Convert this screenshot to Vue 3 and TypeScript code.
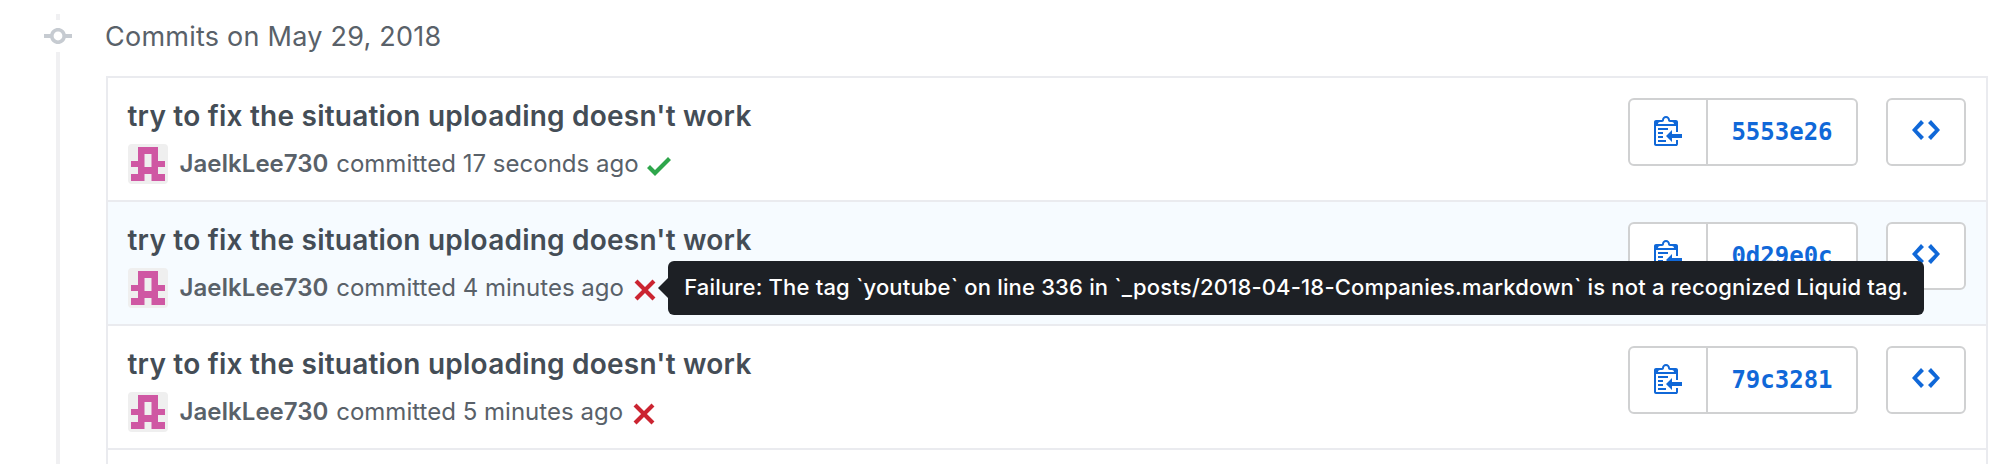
<script setup lang="ts">
interface Commit {
  sha: string
  title: string
  author: string
  time: string
  passed: boolean
  active?: boolean
  tooltip?: string
}

const title = "try to fix the situation uploading doesn't work"
const author = 'JaeIkLee730'

const commits: Commit[] = [
  { sha: '5553e26', title, author, time: '17 seconds ago', passed: true },
  {
    sha: '0d29e0c',
    title,
    author,
    time: '4 minutes ago',
    passed: false,
    active: true,
    tooltip:
      'Failure: The tag `youtube` on line 336 in `_posts/2018-04-18-Companies.markdown` is not a recognized Liquid tag.',
  },
  { sha: '79c3281', title, author, time: '5 minutes ago', passed: false },
]
</script>

<template>
  <main class="page">
    <aside class="rail">
      <span class="line line-top"></span>
      <svg class="node" width="28" height="32" viewBox="0 0 14 16">
        <path d="M10.86 7c-.45-1.72-2-3-3.86-3-1.86 0-3.41 1.28-3.86 3H0v2h3.14c.45 1.72 2 3 3.86 3 1.86 0 3.41-1.28 3.86-3H14V7h-3.14zM7 10.2c-1.22 0-2.2-.98-2.2-2.2 0-1.22.98-2.2 2.2-2.2 1.22 0 2.2.98 2.2 2.2 0 1.22-.98 2.2-2.2 2.2z" />
      </svg>
      <span class="line line-rest"></span>
    </aside>

    <section class="group">
      <h3 class="date">Commits on May 29, 2018</h3>
      <ol class="commits">
        <li v-for="c in commits" :key="c.sha" class="commit" :class="{ active: c.active }">
          <div class="info">
            <p class="title">{{ c.title }}</p>
            <div class="meta">
              <svg class="avatar" width="40" height="40" viewBox="0 0 40 40">
                <rect width="40" height="40" rx="4" fill="#efefef" />
                <path fill="#cf57a3" d="M10 3h20v14h7v6h-7v7h7v7H23.5v-7h-7v7H3v-7h7v-7H3v-6h7zM16.5 10v13h7V10z" />
              </svg>
              <span class="text"><b>{{ c.author }}</b> committed {{ c.time }}</span>
              <span class="status" :class="{ passed: c.passed }">
                <svg width="24" height="32" viewBox="0 0 12 16">
                  <path v-if="c.passed" d="M12 5l-8 8-4-4 1.5-1.5L4 10l6.5-6.5L12 5z" />
                  <path v-else d="M7.48 8l3.75 3.75-1.48 1.48L6 9.48l-3.75 3.75-1.48-1.48L4.52 8 .77 4.25l1.48-1.48L6 6.52l3.75-3.75 1.48 1.48L7.48 8z" />
                </svg>
                <span v-if="c.tooltip" class="tooltip">{{ c.tooltip }}</span>
              </span>
            </div>
          </div>
          <div class="actions">
            <div class="pair">
              <button class="copy" type="button" aria-label="Copy SHA">
                <svg width="28" height="32" viewBox="0 0 14 16">
                  <path fill-rule="evenodd" d="M2 13h4v1H2v-1zm5-6H2v1h5V7zm2 3V8l-3 3 3 3v-2h5v-2H9zM4.5 9H2v1h2.5V9zM2 12h2.5v-1H2v1zm9 1h1v2c-.02.28-.11.52-.3.7-.19.18-.42.28-.7.3H1c-.55 0-1-.45-1-1V4c0-.55.45-1 1-1h3c0-1.11.89-2 2-2 1.11 0 2 .89 2 2h3c.55 0 1 .45 1 1v5h-1V6H1v9h10v-2zM2 5h8c0-.55-.45-1-1-1H8c-.55 0-1-.45-1-1s-.45-1-1-1-1 .45-1 1-.45 1-1 1H3c-.55 0-1 .45-1 1z" />
                </svg>
              </button>
              <button class="sha" type="button">{{ c.sha }}</button>
            </div>
            <button class="browse" type="button" aria-label="Browse files">
              <svg width="28" height="32" viewBox="0 0 14 16">
                <path d="M9.5 3L8 4.5 11.5 8 8 11.5 9.5 13 14 8 9.5 3zm-5 0L0 8l4.5 5L6 11.5 2.5 8 6 4.5 4.5 3z" />
              </svg>
            </button>
          </div>
        </li>
        <li class="commit"></li>
      </ol>
    </section>
  </main>
</template>

<style scoped>
* {
  box-sizing: border-box;
}

.page {
  display: flex;
  height: 464px;
  overflow: hidden;
  background: #fff;
  font-family: Inter, "Liberation Sans", sans-serif;
}

.rail {
  display: flex;
  flex: 0 0 106px;
  flex-direction: column;
  padding: 14px 0 0 44px;
}

.line {
  width: 4px;
  margin-left: 12px;
  background: #f0f0f2;
}

.line-top {
  height: 6px;
}

.line-rest {
  flex: 1;
}

.node {
  display: block;
  flex: none;
  fill: #c6cbd1;
}

.group {
  width: 1882px;
  padding-top: 21px;
}

.date {
  margin: 0 0 23px -1px;
  color: #596169;
  font-size: 27px;
  font-weight: 400;
  line-height: 32px;
  letter-spacing: 0.24px;
}

.commits {
  margin: 0;
  padding: 0;
  border: 2px solid #eaebef;
  border-bottom: 0;
  list-style: none;
}

.commit {
  display: flex;
  justify-content: space-between;
  height: 124px;
  padding: 18px 20px 16px;
  border-bottom: 2px solid #eaebef;
}

.active {
  background: #f6fbff;
}

.title {
  margin: 0 0 8px -0.5px;
  color: #444d56;
  font-size: 28px;
  font-weight: 600;
  line-height: 40px;
  letter-spacing: 0.22px;
  white-space: nowrap;
}

.meta {
  display: flex;
  height: 40px;
  color: #596169;
  font-size: 24px;
  line-height: 40px;
  white-space: nowrap;
}

.avatar {
  display: block;
  margin-right: 11.5px;
}

.text b {
  margin-right: 1px;
  font-weight: 600;
}

.text {
  letter-spacing: 0.02px;
}

.status {
  position: relative;
  height: 40px;
  padding: 6px 0 0 8.5px;
  fill: #cb2431;
}

.passed {
  fill: #2ea64b;
}

.status svg {
  display: block;
}

.tooltip {
  position: absolute;
  top: -7px;
  left: 44.2px;
  width: 1256px;
  height: 54px;
  padding-left: 16px;
  border-radius: 6px;
  background: #1d2025;
  color: #fff;
  font-size: 22px;
  font-weight: 500;
  line-height: 52px;
  letter-spacing: 0.17px;
  z-index: 2;
}

.tooltip::before {
  content: "";
  position: absolute;
  top: 17px;
  left: -10px;
  border: 10px solid transparent;
  border-right-color: #1d2025;
  border-left-width: 0;
}

.actions {
  display: flex;
  gap: 28px;
  height: 68px;
  margin-top: 2px;
}

.pair {
  display: flex;
}

button {
  display: flex;
  align-items: center;
  justify-content: center;
  height: 68px;
  margin: 0;
  padding: 0;
  border: 2px solid #d0d1d2;
  border-radius: 6px;
  background: #fff;
  color: #1068d8;
}

button svg {
  display: block;
  margin-bottom: 4px;
  fill: currentColor;
}

.copy {
  width: 80px;
  border-radius: 6px 0 0 6px;
}

.sha {
  width: 150px;
  border-left: 0;
  border-radius: 0 6px 6px 0;
  font-family: "DejaVu Sans Mono", monospace;
  font-size: 24px;
  font-weight: 700;
}

.browse {
  width: 80px;
}
</style>
